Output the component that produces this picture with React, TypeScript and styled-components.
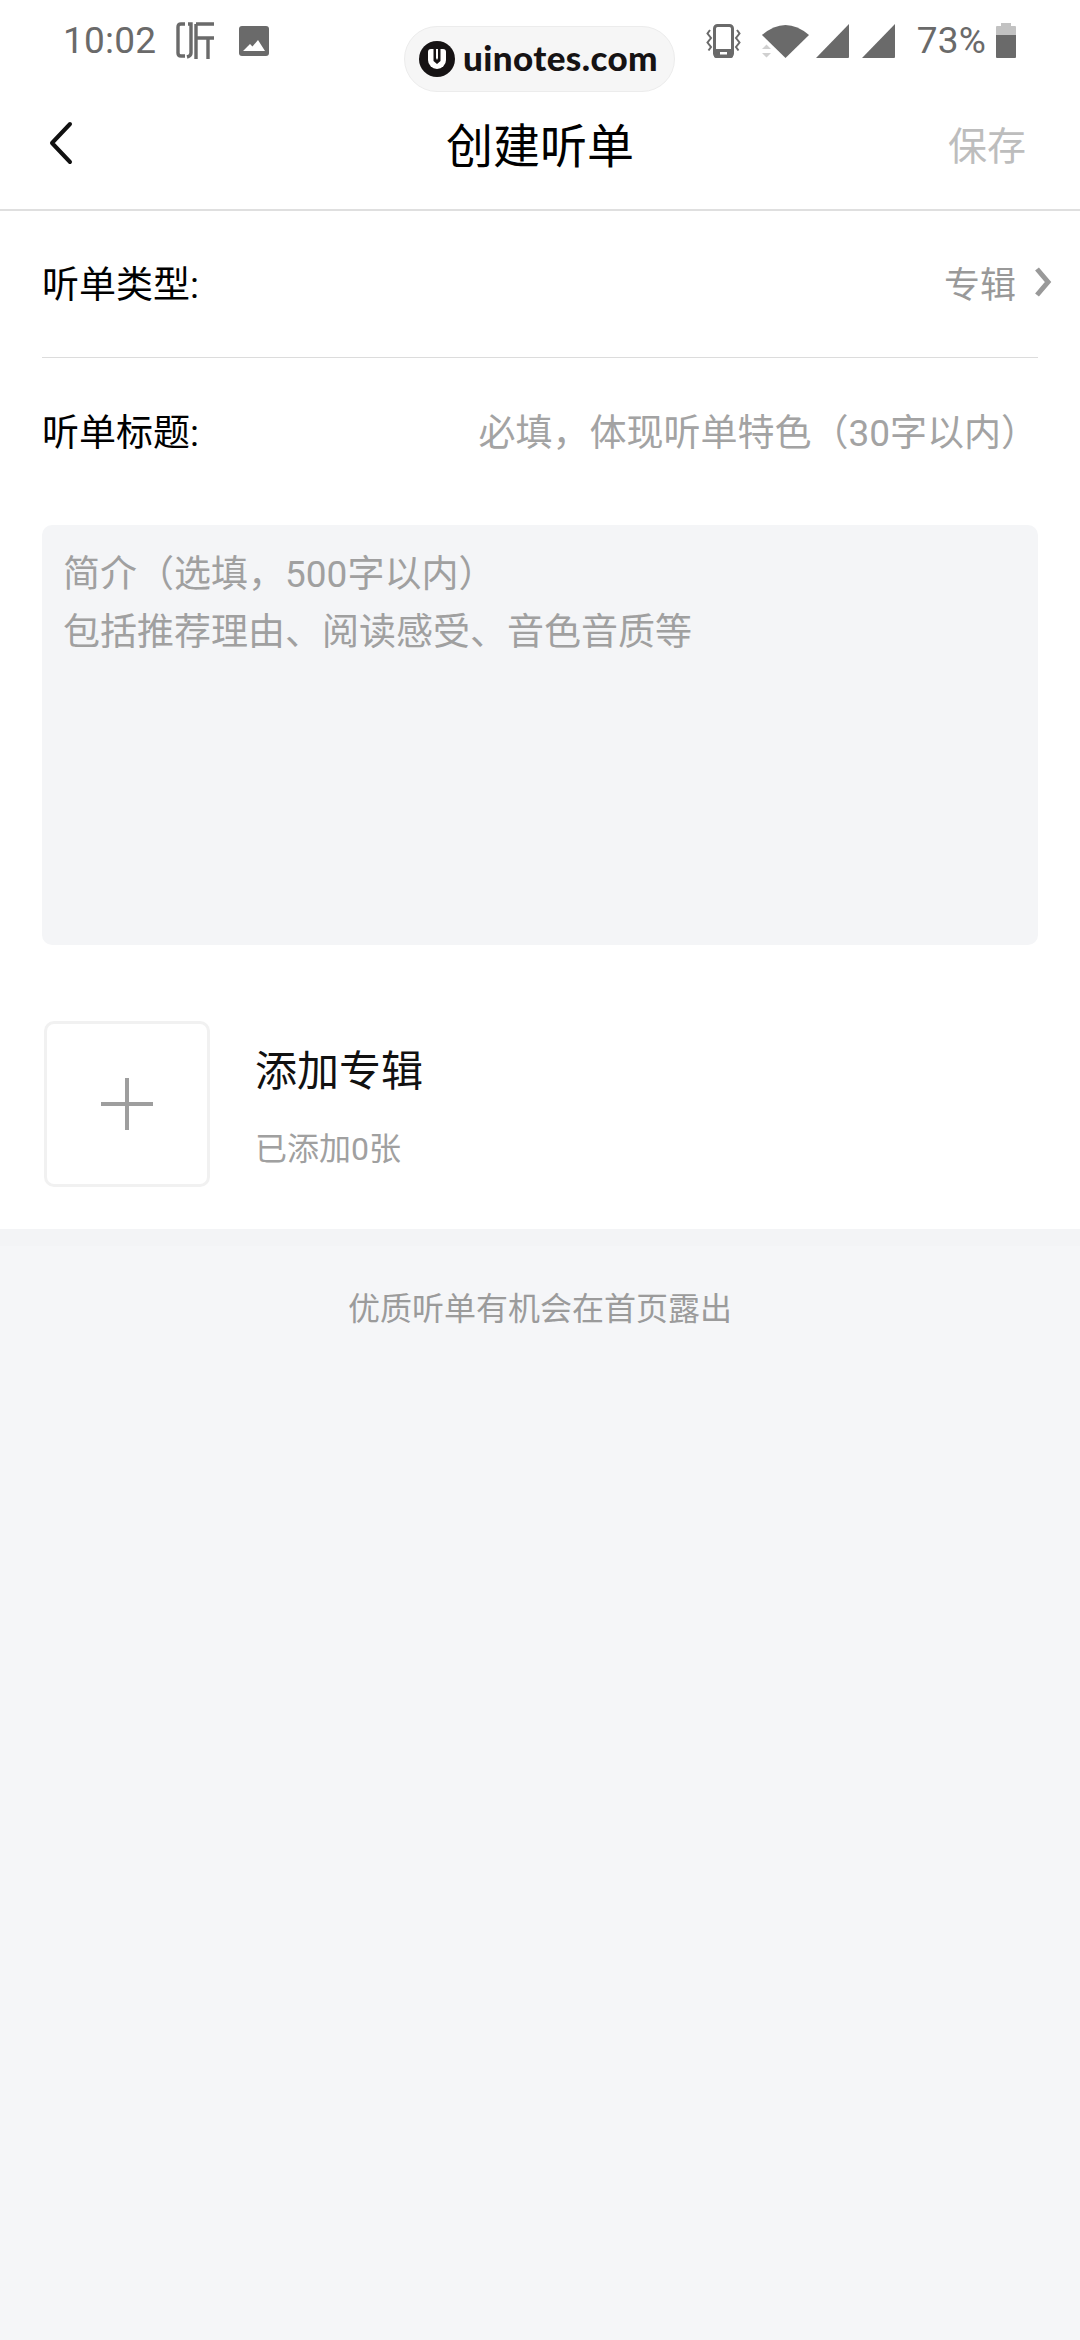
import React from "react";
import styled, { createGlobalStyle } from "styled-components";

const GlobalStyle = createGlobalStyle`
    html, body {
        margin: 0;
        padding: 0;
        background: #f5f6f8;
    }
    * {
        box-sizing: border-box;
    }
`;

const CJK = `Roboto, "Noto Sans CJK SC", sans-serif`;

const Page = styled.div`
    position: relative;
    width: 1080px;
    height: 2340px;
    background: #f5f6f8;
    font-family: ${CJK};
    overflow: hidden;
`;

const Top = styled.div`
    background: #fff;
`;

const StatusBar = styled.div`
    height: 70px;
    padding: 20px 64px 0 63px;
    display: flex;
    align-items: flex-start;
    justify-content: space-between;
    color: #6a6a6a;
`;

const StatusGroup = styled.div`
    display: flex;
    align-items: center;
`;

const StatusSpace = styled.span<{ $w: number }>`
    width: ${(p) => p.$w}px;
`;

const StatusText = styled.span`
    font-family: Roboto, sans-serif;
    font-size: 37px;
    line-height: 42px;
    letter-spacing: 0.2px;
`;

const Pill = styled.div`
    position: absolute;
    left: 404px;
    top: 26px;
    width: 271px;
    height: 66px;
    border-radius: 33px;
    background: #f6f6f6;
    border: 1px solid #ececec;
    display: flex;
    align-items: center;
    padding-left: 14px;
    gap: 8px;
`;

const PillText = styled.span`
    font-family: Lato, sans-serif;
    font-weight: 900;
    font-size: 35px;
    letter-spacing: 0.4px;
    color: #161314;
    line-height: 1;
    margin-top: -3px;
`;

const Header = styled.div`
    height: 141px;
    padding: 7px 54px 0 48px;
    display: flex;
    align-items: center;
    justify-content: space-between;
    border-bottom: 2px solid #dfdfdf;
    position: relative;
`;

const Title = styled.div`
    position: absolute;
    left: 0;
    right: 0;
    text-align: center;
    font-size: 47px;
    color: #000;
    line-height: 60px;
    padding-top: 8px;
`;

const Save = styled.span`
    font-size: 39px;
    color: #bdbdbd;
`;

const Form = styled.div`
    background: #fff;
    padding: 0 42px;
    height: 1018px;
`;

const Row = styled.div<{ $divider?: boolean; $height: number }>`
    height: ${(p) => p.$height}px;
    display: flex;
    align-items: center;
    justify-content: space-between;
    border-bottom: ${(p) => (p.$divider ? "1px solid #dcdcdc" : "none")};
    padding-bottom: 4px;
`;

const Label = styled.span`
    font-size: 37px;
    color: #000;
`;

const TypeValue = styled.div`
    display: flex;
    align-items: center;
    gap: 18px;
    margin-right: -14px;
    font-size: 36px;
    color: #999;
`;

const Placeholder = styled.span`
    font-size: 37px;
    color: #a3a3a3;
`;

const Intro = styled.div`
    margin-top: 20px;
    height: 420px;
    background: #f4f5f7;
    border-radius: 10px;
    padding: 21px 21px;
    font-size: 37px;
    line-height: 58px;
    color: #a0a0a0;
`;

const AddRow = styled.div`
    margin-top: 76px;
    display: flex;
    align-items: center;
    padding-left: 2px;
    gap: 45px;
`;

const AddBox = styled.div`
    width: 166px;
    height: 166px;
    border: 3px solid #f1f1f1;
    border-radius: 10px;
    display: flex;
    align-items: center;
    justify-content: center;
`;

const AddText = styled.div`
    display: flex;
    flex-direction: column;
    gap: 25px;
    margin-top: 5px;
`;

const AddTitle = styled.span`
    font-size: 42px;
    line-height: 60px;
    color: #111;
`;

const AddSub = styled.span`
    font-size: 32px;
    line-height: 44px;
    color: #a0a0a0;
`;

const FooterShade = styled.div`
    height: 17px;
    background: #f3f4f6;
`;

const Hint = styled.div`
    margin-top: 39px;
    text-align: center;
    font-size: 32px;
    line-height: 48px;
    color: #9b9b9b;
`;

const ListenIcon = () => (
    <svg width="40" height="40" viewBox="0 0 40 40" style={{ marginLeft: 20 }}>
        <g fill="none" stroke="#6a6a6a" strokeWidth="3.4">
            <path d="M9 3H5Q2 3 2 6V32Q2 35 5 35H9" />
            <path d="M12 3H15V32Q15 35 11 36" />
            <path d="M20 3V38M20 3H38M20 17H38M32 17V38" />
        </g>
    </svg>
);

const PictureIcon = () => (
    <svg width="30" height="30" viewBox="0 0 30 30" style={{ marginLeft: 23 }}>
        <rect width="30" height="30" rx="3" fill="#6a6a6a" />
        <path d="M4 25l7-7 2.5 2.5L19 14l7 11z" fill="#fff" />
    </svg>
);

const VibrateIcon = () => (
    <svg width="35" height="35" viewBox="0 0 35 35">
        <rect x="8.5" y="1.5" width="18" height="31" rx="3" fill="none" stroke="#6a6a6a" strokeWidth="3" />
        <rect x="8" y="25" width="19" height="9" rx="2" fill="#6a6a6a" />
        <rect x="14" y="28" width="7" height="2.5" fill="#fff" />
        <path d="M4 6L1.5 9.5 5 14 1.5 18.5 5 23 2.5 26.5M31 6l2.5 3.5L30 14l3.5 4.5L30 23l2.5 3.5" fill="none" stroke="#6a6a6a" strokeWidth="2" />
    </svg>
);

const WifiIcon = () => (
    <svg width="47" height="36" viewBox="0 0 47 36">
        <path d="M0 12Q23.5 -8 47 12L23.5 35z" fill="#6a6a6a" />
        <path d="M0 26l4.5-4.5L9 26zM0 30l4.5 4.5L9 30z" fill="#d0d0d0" />
    </svg>
);

const SignalIcon = () => (
    <svg width="35" height="36" viewBox="0 0 35 36">
        <path d="M34 1v33a1 1 0 0 1-1 1H1z" fill="#6a6a6a" />
    </svg>
);

const BatteryIcon = () => (
    <svg width="20" height="36" viewBox="0 0 20 36">
        <path d="M5 0h10v3h4a1 1 0 0 1 1 1v9H0V4a1 1 0 0 1 1-1h4z" fill="#c2c2c2" />
        <path d="M0 12h20v22a1 1 0 0 1-1 1H1a1 1 0 0 1-1-1z" fill="#6a6a6a" />
    </svg>
);

const LogoMark = () => (
    <svg width="36" height="36" viewBox="0 0 36 36">
        <circle cx="18" cy="18" r="18" fill="#161314" />
        <path d="M9 11Q9 8 12 8H24Q27 8 27 11V19A9 9 0 0 1 9 19z" fill="#fff" />
        <path d="M14.5 8h2.5v9l1 2 1-2V8h2.5v12l-3.5 3-3.5-3z" fill="#161314" />
    </svg>
);

const BackIcon = () => (
    <svg width="26" height="44" viewBox="0 0 26 44">
        <path d="M22 3L4 22l18 19" fill="none" stroke="#111" strokeWidth="4" strokeLinecap="round" strokeLinejoin="round" />
    </svg>
);

const ChevronIcon = () => (
    <svg width="18" height="30" viewBox="0 0 18 30">
        <path d="M3 2l11 13L3 28" fill="none" stroke="#999" strokeWidth="5" />
    </svg>
);

const PlusIcon = () => (
    <svg width="52" height="52" viewBox="0 0 52 52">
        <path d="M26 0v52M0 26h52" stroke="#9e9e9e" strokeWidth="4" />
    </svg>
);

const App = () => {
    return (
        <Page>
            <GlobalStyle />
            <Top>
                <StatusBar>
                    <StatusGroup>
                        <StatusText>10:02</StatusText>
                        <ListenIcon />
                        <PictureIcon />
                    </StatusGroup>
                    <StatusGroup>
                        <VibrateIcon />
                        <StatusSpace $w={21} />
                        <WifiIcon />
                        <StatusSpace $w={6} />
                        <SignalIcon />
                        <StatusSpace $w={11} />
                        <SignalIcon />
                        <StatusSpace $w={21} />
                        <StatusText>73%</StatusText>
                        <StatusSpace $w={10} />
                        <BatteryIcon />
                    </StatusGroup>
                </StatusBar>
                <Pill>
                    <LogoMark />
                    <PillText>uinotes.com</PillText>
                </Pill>
                <Header>
                    <BackIcon />
                    <Title>创建听单</Title>
                    <Save>保存</Save>
                </Header>
            </Top>
            <Form>
                <Row $divider $height={147}>
                    <Label>听单类型:</Label>
                    <TypeValue>
                        专辑
                        <ChevronIcon />
                    </TypeValue>
                </Row>
                <Row $height={147}>
                    <Label>听单标题:</Label>
                    <Placeholder>必填，体现听单特色（30字以内）</Placeholder>
                </Row>
                <Intro>
                    简介（选填，500字以内）
                    <br />
                    包括推荐理由、阅读感受、音色音质等
                </Intro>
                <AddRow>
                    <AddBox>
                        <PlusIcon />
                    </AddBox>
                    <AddText>
                        <AddTitle>添加专辑</AddTitle>
                        <AddSub>已添加0张</AddSub>
                    </AddText>
                </AddRow>
            </Form>
            <FooterShade />
            <Hint>优质听单有机会在首页露出</Hint>
        </Page>
    );
};

export default App;
